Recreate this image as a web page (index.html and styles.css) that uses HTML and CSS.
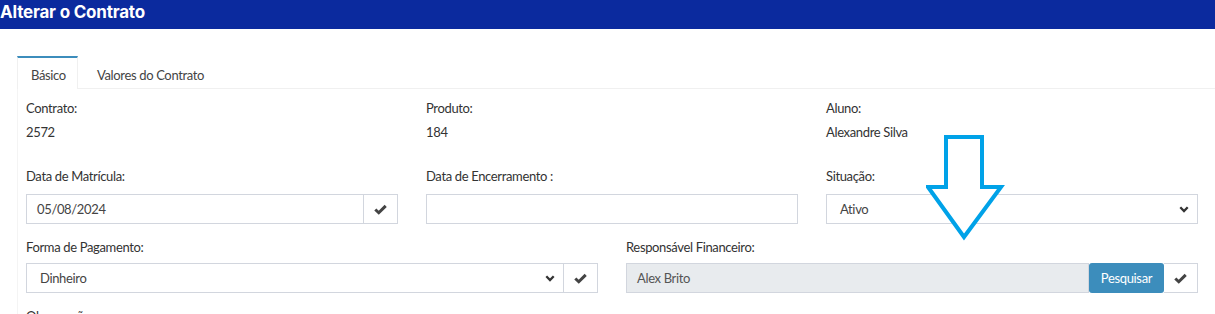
FILE: index.html
```html
<!DOCTYPE html>
<html lang="pt-BR">
<head>
<meta charset="utf-8">
<title>Alterar o Contrato</title>
<link rel="stylesheet" href="styles.css">
</head>
<body>
<header class="topbar"><h1 class="title">Alterar o Contrato</h1></header>
<main class="content">
  <div class="tabs">
    <ul class="tab-list">
      <li class="tab active">Básico</li>
      <li class="tab">Valores do Contrato</li>
    </ul>
    <div class="pane">
      <div class="row row-3">
        <div class="field">
          <div class="label">Contrato:</div>
          <div class="value">2572</div>
        </div>
        <div class="field">
          <div class="label">Produto:</div>
          <div class="value">184</div>
        </div>
        <div class="field">
          <div class="label">Aluno:</div>
          <div class="value">Alexandre Silva</div>
        </div>
      </div>
      <div class="row row-3 gap-top">
        <div class="field">
          <div class="label">Data de Matrícula:</div>
          <div class="group">
            <div class="input">05/08/2024</div>
            <div class="addon"><svg class="check" viewBox="0 0 12 10"><path d="M1.2 5 L4.4 8 L10.8 1.6"/></svg></div>
          </div>
        </div>
        <div class="field">
          <div class="label">Data de Encerramento :</div>
          <div class="group">
            <div class="input"></div>
          </div>
        </div>
        <div class="field">
          <div class="label">Situação:</div>
          <div class="group">
            <div class="input select">Ativo<svg class="chev" viewBox="0 0 10 7"><path d="M1.3 1.3 L5 5 L8.7 1.3"/></svg></div>
          </div>
        </div>
      </div>
      <div class="row row-2">
        <div class="field">
          <div class="label">Forma de Pagamento:</div>
          <div class="group">
            <div class="input select">Dinheiro<svg class="chev" viewBox="0 0 10 7"><path d="M1.3 1.3 L5 5 L8.7 1.3"/></svg></div>
            <div class="addon"><svg class="check" viewBox="0 0 12 10"><path d="M1.2 5 L4.4 8 L10.8 1.6"/></svg></div>
          </div>
        </div>
        <div class="field">
          <div class="label">Responsável Financeiro:</div>
          <div class="group">
            <div class="input readonly">Alex Brito</div>
            <button class="btn">Pesquisar</button>
            <div class="addon"><svg class="check" viewBox="0 0 12 10"><path d="M1.2 5 L4.4 8 L10.8 1.6"/></svg></div>
          </div>
        </div>
      </div>
      <div class="row">
        <div class="field">
          <div class="label">Observação:</div>
        </div>
      </div>
    </div>
  </div>
</main>
<svg class="callout" viewBox="0 0 80 106" width="80" height="106">
  <path d="M20 2 H56 V52 H75 L38 102 L2 52 H20 Z"/>
</svg>
</body>
</html>
```
FILE: styles.css
```css
* { box-sizing: border-box; }
html, body { margin: 0; padding: 0; background: #fff; }
body {
  font-family: "Lato", "Open Sans", "Liberation Sans", sans-serif;
  font-size: 13px;
  letter-spacing: -0.35px;
  color: #333;
  position: relative;
  height: 314px;
  overflow: hidden;
}
.topbar {
  background: #0b2a9e;
  height: 29px;
  display: flex;
  align-items: center;
}
.title {
  margin: 0;
  color: #fff;
  font-family: "Inter", "Lato", sans-serif;
  font-weight: 700;
  font-size: 17px;
  letter-spacing: -0.2px;
  line-height: 29px;
  padding-bottom: 4px;
}
.content {
  padding: 27px 0 0 17px;
}
.tab-list {
  list-style: none;
  margin: 0;
  padding: 0;
  display: flex;
  border-bottom: 1px solid #f0f0f0;
  height: 33px;
}
.tab {
  padding: 0 14px;
  height: 33px;
  line-height: 34px;
  color: #444;
  margin-right: 5px;
  border-top: 2px solid transparent;
}
.tab.active {
  border-top: 2px solid #3c8dbc;
  border-left: 1px solid #f0f0f0;
  border-right: 1px solid #f0f0f0;
  background: #fff;
  margin-bottom: -1px;
  padding: 0 13px;
  width: 61px;
}
.pane {
  border-left: 1px solid #f4f4f4;
  padding: 10px 0 0 8px;
}
.row {
  display: grid;
  column-gap: 28px;
  width: 1172px;
}
.row-3 { grid-template-columns: repeat(3, 1fr); }
.row-2 { grid-template-columns: repeat(2, 1fr); }
.gap-top { margin-top: 26px; margin-bottom: 14px; }
.label {
  line-height: 18px;
  height: 18px;
}
.value {
  margin-top: 6px;
  line-height: 18px;
}
.gap-top .label { margin-bottom: 9px; }
.row-2 .label { margin-bottom: 7px; }
.row-2 { margin-bottom: 14px; }
.group {
  display: flex;
  height: 30px;
}
.input {
  flex: 1;
  border: 1px solid #d2d6de;
  height: 30px;
  padding: 0 10px;
  line-height: 28px;
  color: #444;
  display: flex;
  align-items: center;
}
.input.select {
  padding: 0 8px 0 13px;
  justify-content: space-between;
}
.input.readonly {
  background: #e8ebee;
  color: #555;
}
.addon {
  width: 34px;
  height: 30px;
  border: 1px solid #d2d6de;
  border-left: none;
  display: flex;
  align-items: center;
  justify-content: center;
  background: #fff;
}
.check {
  width: 13px;
  height: 11px;
  fill: none;
  stroke: #444;
  stroke-width: 2.8;
  stroke-linecap: butt;
}
.chev {
  width: 10px;
  height: 7px;
  fill: none;
  stroke: #333;
  stroke-width: 2.3;
}
.btn {
  width: 75px;
  height: 30px;
  border: none;
  border-radius: 3px;
  background: #3c8dbc;
  color: #fff;
  font-family: inherit;
  font-size: 13px;
  letter-spacing: -0.35px;
  padding: 0;
}
.callout {
  position: absolute;
  left: 926px;
  top: 135px;
  fill: #fff;
  stroke: #00a2e8;
  stroke-width: 4;
  stroke-linejoin: miter;
}
```
